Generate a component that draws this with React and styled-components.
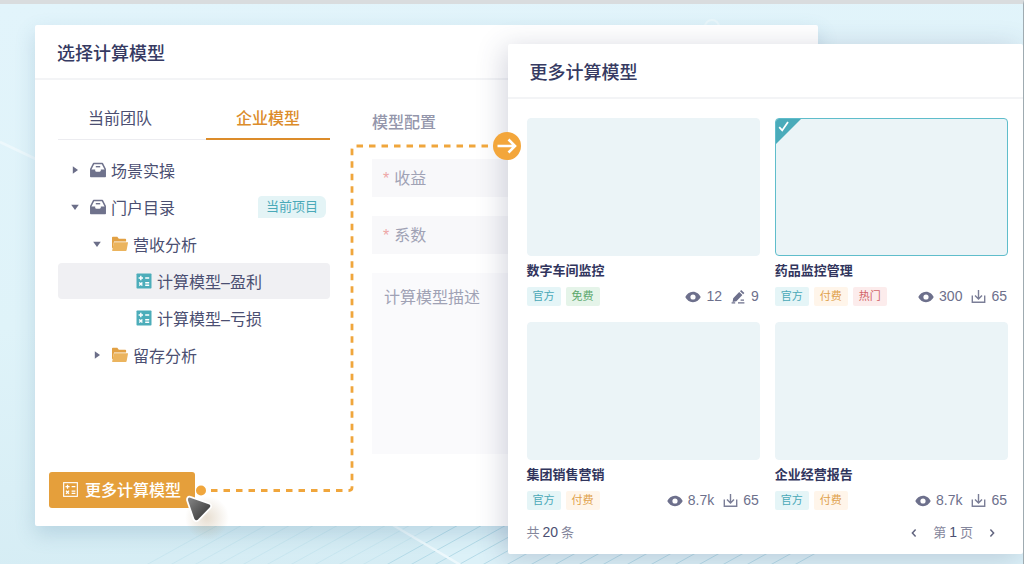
import React, { useState } from "react";
import styled, { createGlobalStyle, css } from "styled-components";

const GlobalStyle = createGlobalStyle`
  * {
    box-sizing: border-box;
  }
  body {
    margin: 0;
    color: #4b4f72;
    font-family: "Liberation Sans", "Noto Sans CJK SC", sans-serif;
    font-size: 16px;
  }
  button,
  input,
  textarea {
    font: inherit;
    color: inherit;
    border: 0;
    padding: 0;
    background: none;
  }
  button {
    cursor: pointer;
  }
`;

const Page = styled.div`
  position: relative;
  min-height: 100vh;
  padding: 21px 20% 38px 35px;
  overflow: hidden;
  border-top: 4px solid #d9dcde;
  border-right: 1px solid #9fabb1;
  background: linear-gradient(175deg, #e2f4fb 0%, #dff3f9 50%, #d3ebf3 100%);
`;

const Backdrop = styled.svg`
  position: absolute;
  inset: 0;
  width: 100%;
  height: 100%;
`;

const Panel = styled.section`
  position: relative;
  background: #fff;
  border-radius: 2px;
  box-shadow: 0 8px 20px rgba(80, 130, 165, 0.24);
`;

const PanelHeader = styled.header`
  height: 55px;
  padding: 4px 22px 0;
  display: flex;
  align-items: center;
  border-bottom: 2px solid #f3f4f6;

  h2 {
    margin: 0;
    color: #363a62;
    font-size: 18px;
    font-weight: 500;
    line-height: 24px;
  }
`;

const PickerBody = styled.div`
  display: flex;
  gap: 42px;
  padding: 16px 0 0 23px;
`;

const TreeColumn = styled.div`
  flex: 0 0 272px;
`;

const Tabs = styled.div`
  display: flex;
  justify-content: space-between;
  margin-bottom: 12px;
  box-shadow: inset 0 -1px #ececf0;
`;

const Tab = styled.button`
  width: 124px;
  height: 44px;
  padding-top: 3px;
  border-bottom: 2px solid transparent;
  line-height: 24px;

  ${(props) =>
    props.$active &&
    css`
      color: #dc8c2a;
      font-weight: 500;
      border-color: #dc8c2a;
    `}
`;

const Tree = styled.div`
  display: flex;
  flex-direction: column;
  gap: 1px;
`;

const TreeRow = styled.button`
  display: flex;
  align-items: center;
  gap: 6px;
  height: 36px;
  padding: 0 4px 0 ${(props) => 12 + props.$level * 22}px;
  border-radius: 4px;
  text-align: left;
  background: ${(props) => (props.$active ? "#f0f0f3" : "transparent")};

  svg {
    flex: none;
  }
`;

const TreeLabel = styled.span`
  display: flex;
  align-items: center;
  gap: 5px;
  margin-left: ${(props) => (props.$nested ? 4 : 0)}px;
`;

const ProjectTag = styled.span`
  margin-left: auto;
  padding: 0 8px;
  border-radius: 4px 6px 6px 0;
  color: #4aa9b8;
  background: #e4f4f6;
  font-size: 13px;
  line-height: 22px;
`;

const ConfigColumn = styled.form`
  flex: 1;
  display: flex;
  flex-direction: column;
  gap: 19px;
  padding: 15px 24px 0 0;
  color: #a0a2b5;

  h3 {
    margin: 0 0 5px;
    color: #9496ab;
    font-size: 16px;
    font-weight: 500;
    line-height: 24px;
  }
  ::placeholder {
    color: #a0a2b5;
    opacity: 1;
  }
`;

const Field = styled.label`
  display: flex;
  align-items: center;
  gap: 5px;
  height: 38px;
  padding: 1px 11px 0;
  background: #f8f8fa;

  span {
    color: #eea6a6;
  }
  input {
    flex: 1;
    min-width: 0;
    outline: none;
  }
`;

const Description = styled.textarea`
  height: 181px;
  padding: 13px 12px;
  resize: none;
  outline: none;
  line-height: 24px;
  background: #fafafc;
`;

const PickerFooter = styled.footer`
  padding: 18px 14px;
`;

const MoreButton = styled.button`
  display: flex;
  align-items: center;
  gap: 7px;
  height: 36px;
  padding: 0 14px 2px;
  border-radius: 3px;
  color: #fff;
  font-weight: 500;
  background: #e59f3b;
`;

const MorePanel = styled(Panel)`
  position: absolute;
  top: 40px;
  left: calc(50% - 4px);
  right: 0;
  box-shadow: -4px 4px 28px rgba(60, 64, 105, 0.22);
`;

const Cards = styled.div`
  display: grid;
  grid-template-columns: 1fr 1fr;
  gap: 16px 15px;
  padding: 19px 15px 0 19px;
`;

const Thumb = styled.button`
  display: flex;
  align-items: flex-start;
  width: 100%;
  height: 138px;
  overflow: hidden;
  border: 1px solid ${(props) => (props.$active ? "#5fbdcb" : "#ebf4f7")};
  border-radius: 4px;
  background: #ebf4f7;
`;

const CardTitle = styled.h4`
  margin: 5px 0 6px;
  color: #31355d;
  font-size: 13px;
  font-weight: 700;
  line-height: 20px;
`;

const CardMeta = styled.div`
  display: flex;
  align-items: center;
  gap: 5px;
`;

const tones = {
  官方: ["#4aa9b8", "#e5f5f7"],
  免费: ["#5aa76c", "#e5f4e9"],
  付费: ["#e0a14a", "#fff5ea"],
  热门: ["#d26468", "#fcecec"],
};

const Tag = styled.span`
  padding: 0 6px;
  border-radius: 2px;
  color: ${(props) => tones[props.$tone][0]};
  background: ${(props) => tones[props.$tone][1]};
  font-size: 11px;
  line-height: 19px;
`;

const Stats = styled.div`
  display: flex;
  align-items: center;
  gap: 9px;
  margin-left: auto;
  padding-right: 1px;
  color: #6d708c;
  font-size: 14px;
  line-height: 19px;
`;

const Stat = styled.span`
  display: flex;
  align-items: center;
  gap: 5px;
`;

const MoreFooter = styled.footer`
  display: flex;
  align-items: center;
  justify-content: space-between;
  padding: 12px 23px 11px 19px;
  color: #85879c;
  font-size: 13px;
  line-height: 20px;

  b {
    margin: 0 3px;
    color: #4b4f72;
    font-size: 14px;
    font-weight: 400;
  }
`;

const Pager = styled.div`
  display: flex;
  align-items: center;
  gap: 11px;
`;

const PageButton = styled.button`
  display: flex;
  align-items: center;
  justify-content: center;
  width: 16px;
  height: 16px;
`;

const Connector = styled.svg`
  position: absolute;
  top: 127px;
  left: 192px;
  pointer-events: none;
`;

const Pointer = styled.svg`
  position: absolute;
  top: 488px;
  left: 180px;
  pointer-events: none;
`;

const Caret = ({ open }) => (
  <svg width="10" height="10" viewBox="0 0 10 10" fill="#6b6e88" aria-hidden="true">
    {open ? <path d="M1.2 2.800h7.600L5 8z" /> : <path d="M2.800 1.200v7.600L8 5z" />}
  </svg>
);

const TrayIcon = () => (
  <svg width="16" height="16" viewBox="0 0 16 16" aria-hidden="true">
    <path d="M3.6 1.6h8.8l2.8 5.6v7.2H.8V7.2z" fill="#fff" stroke="#6f728c" strokeWidth="1.5" strokeLinejoin="round" />
    <path d="M.8 7.4h4.4v1.200c0 .8.500 1.200 1.200 1.200h3.200c.7 0 1.200-.4 1.200-1.200V7.400h4.400v7H.8z" fill="#6f728c" />
    <path d="M5.800 4.700h4.400" stroke="#6f728c" strokeWidth="1.400" />
  </svg>
);

const FolderIcon = () => (
  <svg width="16" height="16" viewBox="0 0 16 16" aria-hidden="true">
    <path d="M0 1.500C0 1.100.4.800.8.800h4.500l1.500 1.900h6.500c.5 0 .8.300.8.800v2H2L.8 12H0z" fill="#e2a144" />
    <path d="M2.600 6.200h13c.4 0 .5.300.4.600l-1.400 7.500c-.1.500-.4.700-.8.700H.8c-.5 0-.7-.3-.6-.8l1.500-7.300c.1-.5.400-.7.900-.7z" fill="#ebb45e" />
  </svg>
);

const Operators = () => (
  <g stroke="#fff" strokeWidth="1.400" fill="none">
    <path d="M2.600 5h4.400M4.800 2.800v4.400M9.200 5h4M9.200 9.800h4M9.200 12.200h4" />
    <path d="M3.200 9.400l3.200 3.200M6.400 9.400l-3.200 3.200" />
  </g>
);

const ModelIcon = () => (
  <svg width="16" height="16" viewBox="0 0 16 16" aria-hidden="true">
    <rect x=".5" y=".5" width="15" height="15" rx=".8" fill="#4cadba" />
    <Operators />
  </svg>
);

const ModelOutlineIcon = () => (
  <svg width="15" height="15" viewBox="0 0 16 16" aria-hidden="true">
    <rect x=".7" y=".7" width="14.600" height="14.600" fill="none" stroke="#fff" strokeWidth="1.200" />
    <Operators />
  </svg>
);

const EyeIcon = () => (
  <svg width="16" height="12" viewBox="0 0 16 12" aria-hidden="true">
    <path
      fill="#6d708c"
      fillRule="evenodd"
      d="M8 .8C4.400.8 1.700 3.200.300 6 1.700 8.800 4.400 11.200 8 11.200s6.300-2.400 7.700-5.200C14.300 3.200 11.600.8 8 .8zM8 3.400a2.600 2.600 0 110 5.200 2.600 2.600 0 010-5.200z"
    />
  </svg>
);

const DownloadIcon = () => (
  <svg width="15" height="15" viewBox="0 0 15 15" fill="none" stroke="#7b7e97" strokeWidth="1.400" aria-hidden="true">
    <path d="M7.500 1v9M4 6.400l3.500 3.600L11 6.400M1.300 6.600v6.700h12.400V6.600" />
  </svg>
);

const EditIcon = () => (
  <svg width="15" height="14" viewBox="0 0 15 14" aria-hidden="true">
    <path d="M2.200 8.200l6-6.200 3.200 3-6 6.200-3.800.8zM9 1.200l1.200-1.200 3.200 3-1.200 1.200z" fill="#6d708c" />
    <path d="M.6 12.800h3.600M7 12.800h6.400M9.600 10.200h3.400" stroke="#6d708c" strokeWidth="1.300" />
  </svg>
);

const CheckCorner = () => (
  <svg width="25" height="25" viewBox="0 0 25 25" aria-hidden="true">
    <path d="M0 0h25L0 25z" fill="#4aabba" />
    <path d="M3.200 8.200l3 3.200L12 3" fill="none" stroke="#fff" strokeWidth="1.800" />
  </svg>
);

const Chevron = ({ flip }) => (
  <svg width="8" height="10" viewBox="0 0 8 10" fill="none" stroke="#62657f" strokeWidth="1.500" aria-hidden="true">
    <path d={flip ? "M2.400 1.600L5.600 5 2.400 8.400" : "M5.600 1.600L2.400 5l3.200 3.400"} />
  </svg>
);

const stripes = Array.from({ length: 28 }, (_, i) => 130 + i * 24);

const tree = [
  { name: "场景实操", level: 0, icon: <TrayIcon />, open: false },
  { name: "门户目录", level: 0, icon: <TrayIcon />, open: true, tag: "当前项目" },
  { name: "营收分析", level: 1, icon: <FolderIcon />, open: true },
  { name: "计算模型–盈利", level: 3, icon: <ModelIcon /> },
  { name: "计算模型–亏损", level: 3, icon: <ModelIcon /> },
  { name: "留存分析", level: 1, icon: <FolderIcon />, open: false },
];

const cards = [
  { title: "数字车间监控", tags: ["官方", "免费"], views: "12", edits: "9" },
  { title: "药品监控管理", tags: ["官方", "付费", "热门"], views: "300", downloads: "65" },
  { title: "集团销售营销", tags: ["官方", "付费"], views: "8.7k", downloads: "65" },
  { title: "企业经营报告", tags: ["官方", "付费"], views: "8.7k", downloads: "65" },
];

const App = () => {
  const [tab, setTab] = useState("企业模型");
  const [model, setModel] = useState("计算模型–盈利");
  const [card, setCard] = useState("药品监控管理");

  return (
    <Page>
      <GlobalStyle />
      <Backdrop viewBox="0 0 1023 560" preserveAspectRatio="xMidYMid slice" aria-hidden="true">
        <path d="M390 519L470 566H1023V519z" fill="#dcf1f8" />
        <g stroke="#b5dbe8">
          {stripes.map((x) => (
            <path key={x} d={`M${x} 570l110-61`} strokeOpacity={x < 350 ? 0.4 : 1} />
          ))}
        </g>
        <path d="M0 138l40 19M386 517l78 46" stroke="#edf8fc" strokeWidth="2.500" />
        <circle cx="712" cy="23" r="7" fill="none" stroke="#ecf8fc" strokeWidth="2" />
      </Backdrop>

      <Panel>
        <PanelHeader>
          <h2>选择计算模型</h2>
        </PanelHeader>
        <PickerBody>
          <TreeColumn>
            <Tabs role="tablist">
              {["当前团队", "企业模型"].map((name) => (
                <Tab key={name} role="tab" aria-selected={tab === name} $active={tab === name} onClick={() => setTab(name)}>
                  {name}
                </Tab>
              ))}
            </Tabs>
            <Tree>
              {tree.map((row) => (
                <TreeRow key={row.name} $level={row.level} $active={model === row.name} onClick={() => setModel(row.name)}>
                  {row.open !== undefined && <Caret open={row.open} />}
                  <TreeLabel $nested={row.open !== undefined}>
                    {row.icon}
                    {row.name}
                  </TreeLabel>
                  {row.tag && <ProjectTag>{row.tag}</ProjectTag>}
                </TreeRow>
              ))}
            </Tree>
          </TreeColumn>
          <ConfigColumn>
            <h3>模型配置</h3>
            <Field>
              <span>*</span>
              <input placeholder="收益" aria-label="收益" />
            </Field>
            <Field>
              <span>*</span>
              <input placeholder="系数" aria-label="系数" />
            </Field>
            <Description placeholder="计算模型描述" aria-label="计算模型描述" />
          </ConfigColumn>
        </PickerBody>
        <PickerFooter>
          <MoreButton>
            <ModelOutlineIcon />
            更多计算模型
          </MoreButton>
        </PickerFooter>
      </Panel>

      <MorePanel>
        <PanelHeader>
          <h2>更多计算模型</h2>
        </PanelHeader>
        <Cards>
          {cards.map((item) => (
            <article key={item.title}>
              <Thumb
                aria-label={item.title}
                aria-pressed={card === item.title}
                $active={card === item.title}
                onClick={() => setCard(item.title)}
              >
                {card === item.title && <CheckCorner />}
              </Thumb>
              <CardTitle>{item.title}</CardTitle>
              <CardMeta>
                {item.tags.map((tag) => (
                  <Tag key={tag} $tone={tag}>
                    {tag}
                  </Tag>
                ))}
                <Stats>
                  <Stat>
                    <EyeIcon />
                    {item.views}
                  </Stat>
                  <Stat>
                    {item.edits ? <EditIcon /> : <DownloadIcon />}
                    {item.edits || item.downloads}
                  </Stat>
                </Stats>
              </CardMeta>
            </article>
          ))}
        </Cards>
        <MoreFooter>
          <span>
            共<b>20</b>条
          </span>
          <Pager>
            <PageButton aria-label="上一页">
              <Chevron />
            </PageButton>
            <span>
              第<b>1</b>页
            </span>
            <PageButton aria-label="下一页">
              <Chevron flip />
            </PageButton>
          </Pager>
        </MoreFooter>
      </MorePanel>

      <Connector width="332" height="376" viewBox="0 0 332 376" fill="none" aria-hidden="true">
        <path d="M19 359.500H157q3 0 3-3V18q0-3 3-3H301" stroke="#f0a63c" strokeWidth="2.800" strokeDasharray="6.500 6" />
        <circle cx="9" cy="359.500" r="5" fill="#f0a63c" />
        <circle cx="315" cy="15" r="14" fill="#f3a63b" />
        <path d="M305.500 15h18M316.500 8.500l6.500 6.500-6.500 6.500" stroke="#fff" strokeWidth="2.600" />
      </Connector>

      <Pointer width="50" height="50" viewBox="0 0 50 50" aria-hidden="true">
        <defs>
          <linearGradient id="pointer" x1="0" y1="0" x2="1" y2="1">
            <stop offset="0" stopColor="#8a8a8a" />
            <stop offset="1" stopColor="#2c2c2c" />
          </linearGradient>
          <radialGradient id="glow">
            <stop offset="0" stopColor="#b39468" stopOpacity=".3" />
            <stop offset="1" stopColor="#b39468" stopOpacity="0" />
          </radialGradient>
        </defs>
        <circle cx="27" cy="26" r="22" fill="url(#glow)" />
        <path
          d="M10.500 4.800L29 11.500c2.600.9 2.900 3.200 1 4.900L18.600 28.200c-1.800 1.700-4.400 1-5.200-1.300L7.300 9C6.400 6.400 8 3.800 10.500 4.800z"
          fill="url(#pointer)"
          stroke="#fff"
          strokeWidth="1.800"
        />
      </Pointer>
    </Page>
  );
};

export default App;
